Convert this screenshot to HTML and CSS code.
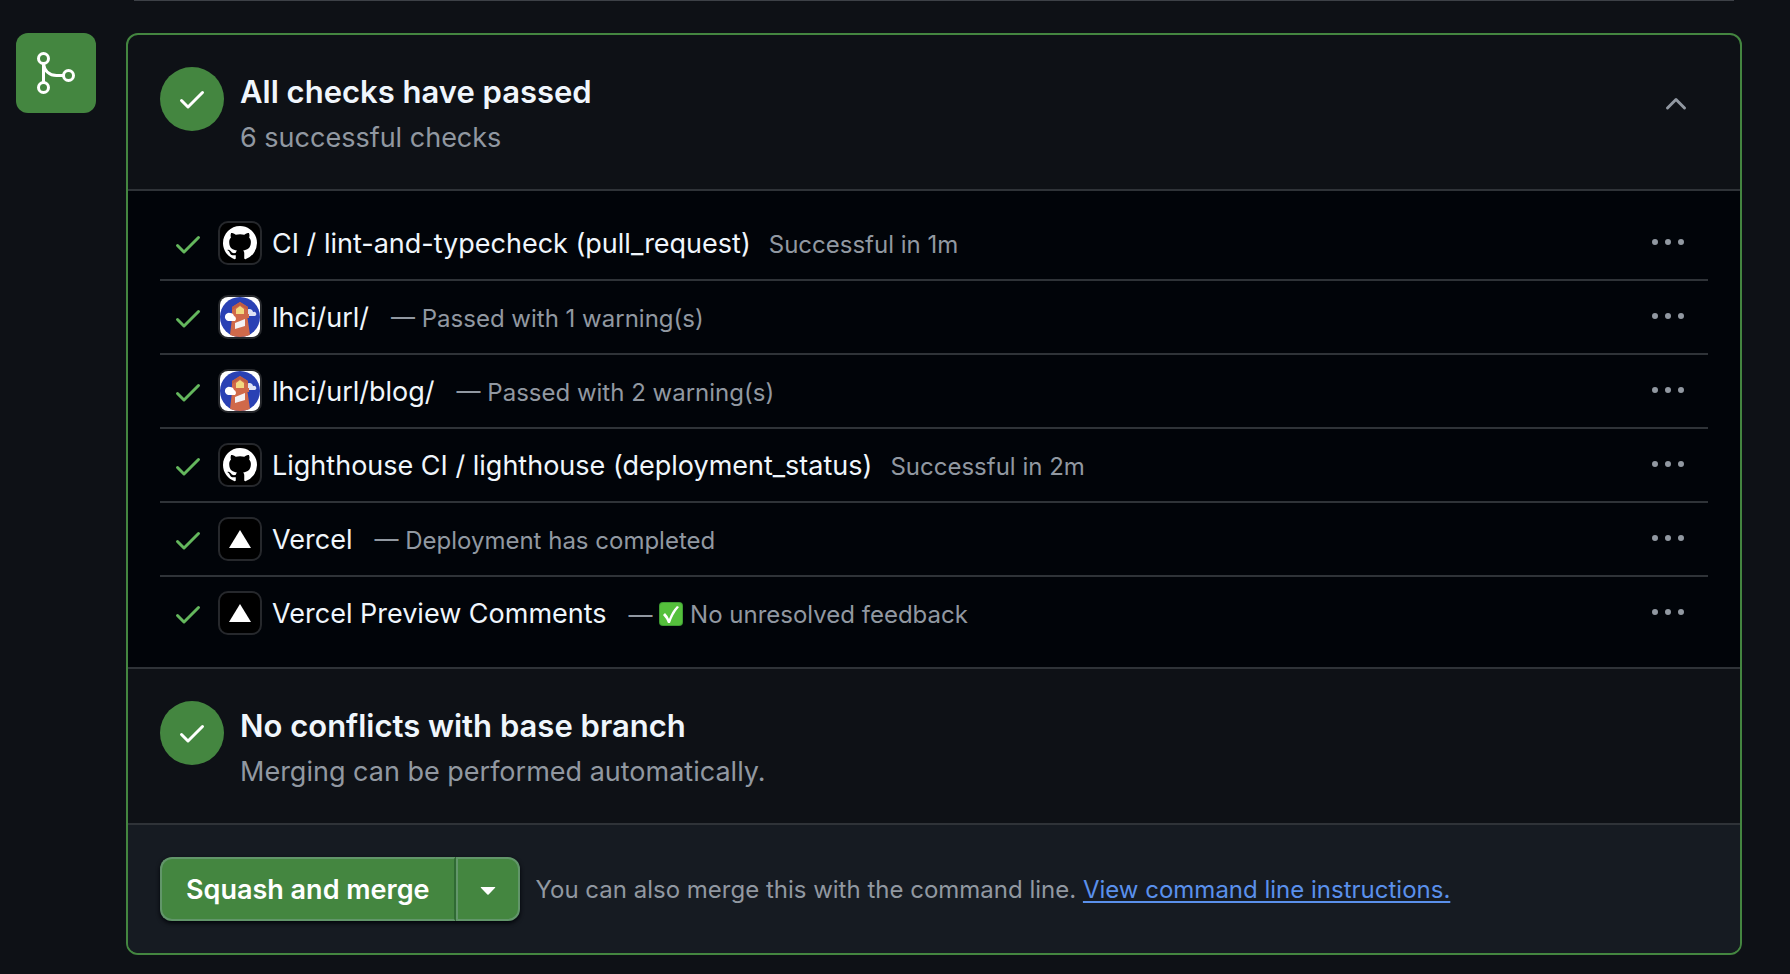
FILE: index.html
```html
<!DOCTYPE html>
<html lang="en">
<head>
  <meta charset="UTF-8">
  <title>Merge status</title>
  <link rel="stylesheet" href="styles.css">
</head>
<body>

  <!-- shared icons -->
  <svg class="sprite" aria-hidden="true">
    <symbol id="check" viewBox="0 0 16 16">
      <path d="M13.78 4.22a.75.75 0 0 1 0 1.06l-7.25 7.25a.75.75 0 0 1-1.06 0L2.22 9.28a.751.751 0 0 1 .018-1.042.751.751 0 0 1 1.042-.018L6 10.94l6.72-6.72a.75.75 0 0 1 1.06 0Z"/>
    </symbol>
    <symbol id="dots" viewBox="0 0 16 16">
      <path d="M8 9.5a1.5 1.5 0 1 0 0-3 1.5 1.5 0 0 0 0 3ZM1.5 9.5a1.5 1.5 0 1 0 0-3 1.5 1.5 0 0 0 0 3Zm13 0a1.5 1.5 0 1 0 0-3 1.5 1.5 0 0 0 0 3Z"/>
    </symbol>
    <symbol id="github" viewBox="0 0 16 16">
      <path d="M8 0C3.58 0 0 3.58 0 8c0 3.54 2.29 6.53 5.47 7.59.4.07.55-.17.55-.38 0-.19-.01-.82-.01-1.49-2.01.37-2.53-.49-2.69-.94-.09-.23-.48-.94-.82-1.13-.28-.15-.68-.52-.01-.53.63-.01 1.08.58 1.23.82.72 1.21 1.87.87 2.33.66.07-.52.28-.87.51-1.07-1.78-.2-3.64-.89-3.64-3.95 0-.87.31-1.59.82-2.15-.08-.2-.36-1.02.08-2.12 0 0 .67-.21 2.2.82.64-.18 1.32-.27 2-.27.68 0 1.36.09 2 .27 1.53-1.04 2.2-.82 2.2-.82.44 1.1.16 1.92.08 2.12.51.56.82 1.27.82 2.15 0 3.07-1.87 3.75-3.65 3.95.29.25.54.73.54 1.48 0 1.07-.01 1.93-.01 2.2 0 .21.15.46.55.38A8.013 8.013 0 0 0 16 8c0-4.42-3.58-8-8-8z"/>
    </symbol>
    <symbol id="lighthouse" viewBox="0 0 40 40">
      <rect width="40" height="40" fill="#fff"/>
      <circle cx="20" cy="20" r="20" fill="#2a41b4"/>
      <path d="M26 18v-4a4 4 0 0 1 6-1 3 3 0 0 1 1 2 2 2 0 0 1 2 4h-9z" fill="#dfe3f5"/>
      <path d="M20 5l8 5v7h1v4h-1.500l2.500 17q-10 4-20 0l2.500-21H12v-7z" fill="#d0694a"/>
      <path d="M20 5l8 5v3l-8-5-8 5v-3z" fill="#bf5d42"/>
      <path d="M16 17v-5l4-3 4 3v5z" fill="#f3d980"/>
      <path d="M15 26l10-4v7l-10 3z" fill="#f4f1f4"/>
      <path d="M8 24a4 4 0 1 1 2-8 4 4 0 0 1 4 3 3 3 0 0 1 1 5z" fill="#fff"/>
    </symbol>
    <symbol id="vercel" viewBox="0 0 40 40">
      <path d="M20 11l11 18H9z"/>
    </symbol>
  </svg>

  <div class="previous-card"></div>

  <div class="merge-box">
    <div class="merge-badge">
      <svg viewBox="0 0 48 48" aria-hidden="true">
        <circle cx="11.5" cy="9.5" r="5"/>
        <circle cx="11.5" cy="38.5" r="5"/>
        <circle cx="36.5" cy="26.5" r="5"/>
        <path d="M11.5 14.5v19M11.5 15c1 7 6 11.5 13 11.5h7"/>
      </svg>
    </div>

    <div class="card">
      <section class="summary">
        <span class="status-circle"><svg aria-hidden="true"><use href="#check"/></svg></span>
        <div class="summary-text">
          <h3>All checks have passed</h3>
          <p>6 successful checks</p>
        </div>
        <button class="collapse" type="button" aria-label="Collapse checks">
          <svg viewBox="0 0 16 16" aria-hidden="true"><path d="M3.22 10.53a.749.749 0 0 1 0-1.06l4.25-4.25a.749.749 0 0 1 1.06 0l4.25 4.25a.749.749 0 1 1-1.06 1.06L8 6.811 4.28 10.53a.749.749 0 0 1-1.06 0Z"/></svg>
        </button>
      </section>

      <ul class="checks">
        <li class="check">
          <svg class="check-icon" aria-hidden="true"><use href="#check"/></svg>
          <span class="avatar"><svg class="github" aria-hidden="true"><use href="#github"/></svg></span>
          <div class="check-text"><span class="name">CI / lint-and-typecheck (pull_request)</span><span class="detail">Successful in 1m</span></div>
          <button class="menu" type="button" aria-label="More actions"><svg aria-hidden="true"><use href="#dots"/></svg></button>
        </li>
        <li class="check">
          <svg class="check-icon" aria-hidden="true"><use href="#check"/></svg>
          <span class="avatar"><svg aria-hidden="true"><use href="#lighthouse"/></svg></span>
          <div class="check-text"><span class="name">lhci/url/</span><span class="detail dash">— Passed with 1 warning(s)</span></div>
          <button class="menu" type="button" aria-label="More actions"><svg aria-hidden="true"><use href="#dots"/></svg></button>
        </li>
        <li class="check">
          <svg class="check-icon" aria-hidden="true"><use href="#check"/></svg>
          <span class="avatar"><svg aria-hidden="true"><use href="#lighthouse"/></svg></span>
          <div class="check-text"><span class="name">lhci/url/blog/</span><span class="detail dash">— Passed with 2 warning(s)</span></div>
          <button class="menu" type="button" aria-label="More actions"><svg aria-hidden="true"><use href="#dots"/></svg></button>
        </li>
        <li class="check">
          <svg class="check-icon" aria-hidden="true"><use href="#check"/></svg>
          <span class="avatar"><svg class="github" aria-hidden="true"><use href="#github"/></svg></span>
          <div class="check-text"><span class="name">Lighthouse CI / lighthouse (deployment_status)</span><span class="detail">Successful in 2m</span></div>
          <button class="menu" type="button" aria-label="More actions"><svg aria-hidden="true"><use href="#dots"/></svg></button>
        </li>
        <li class="check">
          <svg class="check-icon" aria-hidden="true"><use href="#check"/></svg>
          <span class="avatar"><svg aria-hidden="true"><use href="#vercel"/></svg></span>
          <div class="check-text"><span class="name">Vercel</span><span class="detail dash">— Deployment has completed</span></div>
          <button class="menu" type="button" aria-label="More actions"><svg aria-hidden="true"><use href="#dots"/></svg></button>
        </li>
        <li class="check">
          <svg class="check-icon" aria-hidden="true"><use href="#check"/></svg>
          <span class="avatar"><svg aria-hidden="true"><use href="#vercel"/></svg></span>
          <div class="check-text"><span class="name">Vercel Preview Comments</span><span class="detail dash">— <svg class="emoji" viewBox="0 0 24 24" aria-hidden="true"><rect width="24" height="24" rx="4" fill="#3f9e33"/><rect x="1" y="1" width="22" height="22" rx="3" fill="#55c03c"/><path d="M4 13l2-2q3 3 4 6 3-8 8-13l2 1q-6 7-9 16H9Q7 16 4 13z" fill="#fff"/></svg> No unresolved feedback</span></div>
          <button class="menu" type="button" aria-label="More actions"><svg aria-hidden="true"><use href="#dots"/></svg></button>
        </li>
      </ul>

      <section class="summary">
        <span class="status-circle"><svg aria-hidden="true"><use href="#check"/></svg></span>
        <div class="summary-text">
          <h3>No conflicts with base branch</h3>
          <p>Merging can be performed automatically.</p>
        </div>
      </section>

      <footer class="actions">
        <div class="button-group">
          <button class="merge" type="button">Squash and merge</button>
          <button class="merge-options" type="button" aria-label="Select merge method">
            <svg viewBox="0 0 16 16" aria-hidden="true"><path d="m4.427 7.427 3.396 3.396a.25.25 0 0 0 .354 0l3.396-3.396A.25.25 0 0 0 11.396 7H4.604a.25.25 0 0 0-.177.427Z"/></svg>
          </button>
        </div>
        <p>You can also merge this with the command line. <a href="#">View command line instructions.</a></p>
      </footer>
    </div>
  </div>

</body>
</html>
```

FILE: styles.css
```css
* {
  box-sizing: border-box;
}

body {
  margin: 0;
  padding: 0 48px 0 16px;
  background: #0e1116;
  color: #f0f6fc;
  font-family: Inter, "Liberation Sans", sans-serif;
  font-size: 27px;
}

h3, p, ul {
  margin: 0;
  padding: 0;
}

button {
  padding: 0;
  border: none;
  background: none;
  color: inherit;
  font: inherit;
  cursor: pointer;
}

svg {
  display: block;
  fill: currentColor;
}

.sprite {
  position: absolute;
  width: 0;
  height: 0;
}

.previous-card {
  height: 1px;
  margin: 0 8px 32px 118px;
  background: #3d4147;
}

.merge-box {
  display: flex;
  align-items: flex-start;
  gap: 30px;
}

.merge-badge {
  display: flex;
  align-items: center;
  justify-content: center;
  flex: none;
  width: 80px;
  height: 80px;
  border-radius: 12px;
  background: #448640;
}

.merge-badge svg {
  width: 48px;
  height: 48px;
  fill: none;
  stroke: #fff;
  stroke-width: 3;
}

.card {
  flex: 1;
  min-width: 0;
  border: 2px solid #448640;
  border-radius: 12px;
  overflow: hidden;
}

.summary {
  display: flex;
  align-items: flex-start;
  gap: 16px;
  padding: 32px 32px 30px;
  border-bottom: 2px solid #2f3338;
}

.status-circle {
  display: flex;
  align-items: center;
  justify-content: center;
  flex: none;
  width: 64px;
  height: 64px;
  border-radius: 50%;
  background: #448640;
  color: #fff;
}

.status-circle svg {
  width: 32px;
  height: 32px;
}

.summary-text {
  flex: 1;
}

.summary-text h3 {
  font-size: 31px;
  font-weight: 600;
  line-height: 50px;
}

.summary-text p {
  color: #9198a1;
  line-height: 42px;
}

.collapse {
  display: flex;
  align-items: center;
  justify-content: center;
  width: 64px;
  height: 74px;
  color: #9198a1;
}

.collapse svg {
  width: 32px;
  height: 32px;
}

.checks {
  padding: 16px 32px;
  border-bottom: 2px solid #2f3338;
  background: #010409;
  list-style: none;
}

.check {
  display: flex;
  align-items: center;
  height: 74px;
  padding-left: 12px;
  border-bottom: 2px solid #2f3338;
}

.check:last-child {
  border-color: transparent;
}

.check-icon {
  width: 32px;
  height: 32px;
  margin: 2px 14px 0 0;
  color: #64b75d;
}

.avatar {
  display: flex;
  align-items: center;
  justify-content: center;
  flex: none;
  width: 44px;
  height: 44px;
  margin-right: 10px;
  border: 2px solid #26282c;
  border-radius: 10px;
  background: #000;
  color: #fff;
  overflow: hidden;
}

.avatar svg {
  width: 40px;
  height: 40px;
}

.avatar .github {
  width: 34px;
  height: 34px;
}

.check-text {
  flex: 1;
  padding-top: 2px;
  line-height: 42px;
}

.detail {
  margin-left: 18px;
  color: #9198a1;
  font-size: 24px;
}

.dash {
  margin-left: 22px;
}

.emoji {
  display: inline-block;
  width: 24px;
  height: 24px;
  vertical-align: -3px;
}

.menu {
  display: flex;
  align-items: center;
  justify-content: center;
  width: 56px;
  height: 56px;
  margin: 0 12px 2px 0;
  color: #9198a1;
}

.menu svg {
  width: 32px;
  height: 32px;
}

.actions {
  display: flex;
  align-items: center;
  gap: 16px;
  padding: 32px;
  background: #161b22;
  color: #9198a1;
  font-size: 24px;
}

.button-group {
  display: flex;
  height: 64px;
  border-radius: 12px;
  box-shadow: 0 2px 4px #010409;
  color: #fff;
}

.merge {
  padding: 0 24px;
  border: 2px solid #62966a;
  border-right: 2px solid #2f6a33;
  border-radius: 12px 0 0 12px;
  background: #448640;
  font-size: 27px;
  font-weight: 600;
}

.merge-options {
  display: flex;
  align-items: center;
  justify-content: center;
  width: 64px;
  border: 2px solid #62966a;
  border-radius: 0 12px 12px 0;
  background: #448640;
}

.merge-options svg {
  width: 32px;
  height: 32px;
}

.actions a {
  color: #5a90ec;
  text-underline-offset: 3px;
}
```
